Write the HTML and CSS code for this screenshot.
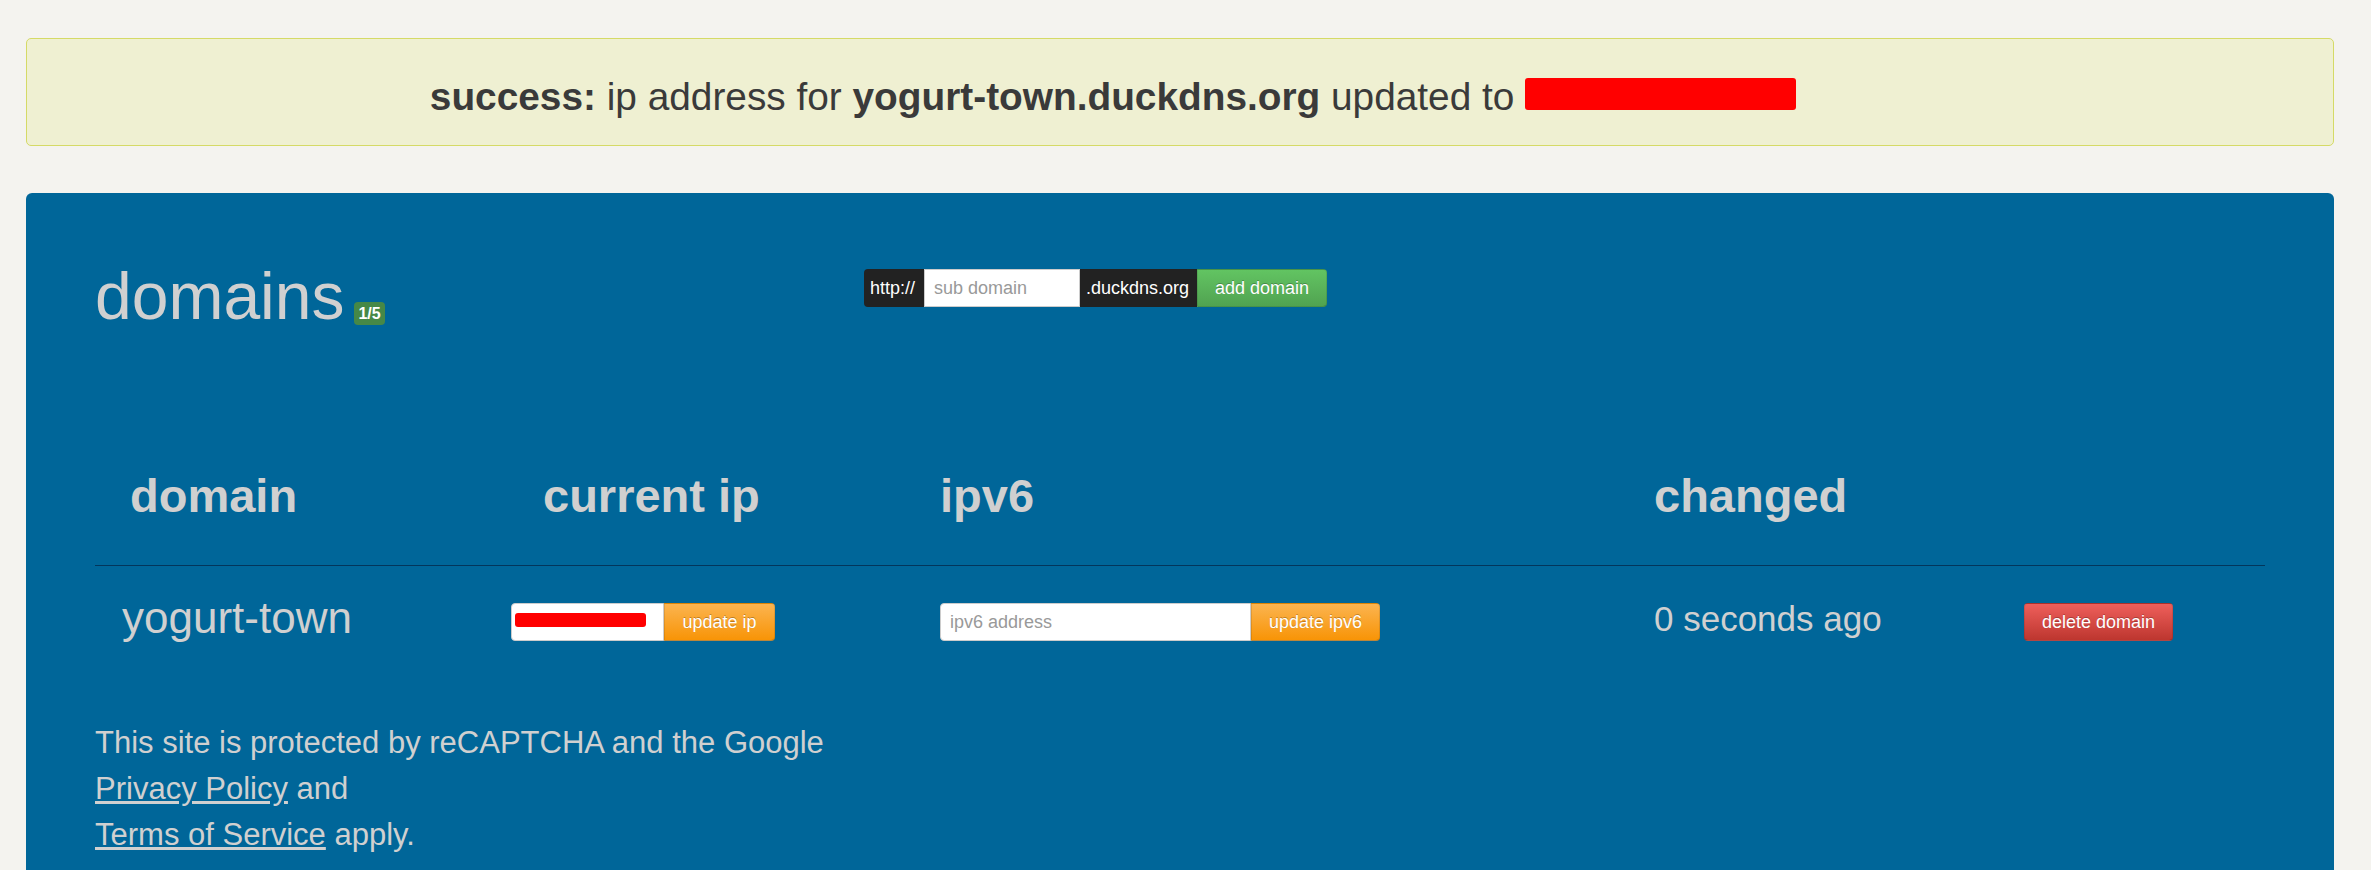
FILE: index.html
```html
<!DOCTYPE html>
<html lang="en">
<head>
<meta charset="utf-8">
<title>Duck DNS - domains</title>
<link rel="stylesheet" href="styles.css">
</head>
<body>
<div class="page">
  <div class="alert">
    <p class="alert-text"><b>success:</b> ip address for <b>yogurt-town.duckdns.org</b> updated to <span class="redact-inline"></span></p>
  </div>

  <section class="panel">
    <div class="panel-head">
      <div class="title-block">
        <h1 class="title">domains</h1><span class="badge">1/5</span>
      </div>
      <form class="add-form">
        <span class="addon addon-left">http://</span>
        <input class="field field-sub" type="text" placeholder="sub domain">
        <span class="addon addon-mid">.duckdns.org</span>
        <button class="btn btn-success btn-right" type="button">add domain</button>
      </form>
    </div>

    <div class="grid grid-head">
      <div class="th th-domain">domain</div>
      <div class="th th-ip">current ip</div>
      <div class="th">ipv6</div>
      <div class="th">changed</div>
      <div class="th"></div>
    </div>

    <div class="grid grid-row">
      <div class="td td-domain">yogurt-town</div>
      <div class="group">
        <div class="field-wrap">
          <input class="field field-ip" type="text" value="">
          <span class="redact-field"></span>
        </div>
        <button class="btn btn-warning btn-right btn-ip" type="button">update ip</button>
      </div>
      <div class="group">
        <input class="field field-ipv6" type="text" placeholder="ipv6 address">
        <button class="btn btn-warning btn-right btn-ipv6" type="button">update ipv6</button>
      </div>
      <div class="td td-changed">0 seconds ago</div>
      <div class="group">
        <button class="btn btn-danger" type="button">delete domain</button>
      </div>
    </div>

    <p class="legal">This site is protected by reCAPTCHA and the Google<br>
      <a href="#">Privacy Policy</a> and<br>
      <a href="#">Terms of Service</a> apply.</p>
  </section>
</div>
</body>
</html>
```

FILE: styles.css
```css
* { box-sizing: border-box; }

html, body {
  margin: 0;
  padding: 0;
  background: #f4f3ef;
  font-family: "Liberation Sans", Arial, sans-serif;
}

.page {
  padding: 38px 37px 0 26px;
}

/* success alert */
.alert {
  height: 108px;
  background: #eff0d2;
  border: 1px solid #d5da66;
  border-radius: 5px;
  display: flex;
  align-items: center;
  justify-content: center;
  padding: 10px 134px 0 0;
}

.alert-text {
  margin: 0;
  font-size: 38.8px;
  color: #3a3a3a;
  white-space: nowrap;
}

.redact-inline {
  display: inline-block;
  width: 271px;
  height: 32px;
  background: #ff0000;
  border-radius: 3px;
}

/* blue panel */
.panel {
  margin-top: 47px;
  background: #006699;
  border-radius: 6px 6px 0 0;
  padding: 70px 69px 60px;
  color: #d0d0d0;
}

.panel-head {
  display: flex;
  align-items: flex-start;
}

.title-block {
  width: 769px;
  flex: none;
  display: flex;
  align-items: baseline;
}

.title {
  margin: 0;
  font-size: 66px;
  line-height: 66px;
  font-weight: normal;
  color: #d0d0d0;
}

.badge {
  margin-left: 10px;
  display: inline-block;
  background: #468847;
  color: #fff;
  font-size: 16px;
  font-weight: bold;
  line-height: 17px;
  padding: 3px 4px;
  border-radius: 4px;
}

.add-form {
  margin: 6px 0 0;
  display: flex;
  height: 38px;
}

.addon {
  background: #222;
  color: #fff;
  font-size: 18px;
  line-height: 38px;
  height: 38px;
  padding: 0 6px;
  white-space: nowrap;
}

.addon-left { border-radius: 4px 0 0 4px; width: 60px; }
.addon-mid { width: 117px; border-radius: 0; }

.field {
  height: 38px;
  border: 1px solid #ccc;
  background: #fff;
  font-family: "Liberation Sans", Arial, sans-serif;
  font-size: 18px;
  color: #555;
  padding: 0 9px;
  margin: 0;
  outline: none;
}

.field::placeholder { color: #999; }

.field-sub { width: 156px; border-radius: 0; }
.field-ip { width: 153px; border-radius: 4px 0 0 4px; }
.field-ipv6 { width: 311px; border-radius: 4px 0 0 4px; }

.btn {
  height: 38px;
  margin: 0;
  font-family: "Liberation Sans", Arial, sans-serif;
  font-size: 18px;
  line-height: 20px;
  white-space: nowrap;
  color: #fff;
  text-shadow: 0 -1px 0 rgba(0, 0, 0, 0.25);
  border: 1px solid rgba(0, 0, 0, 0.1);
  border-bottom-color: rgba(0, 0, 0, 0.25);
  padding: 0 8px;
  border-radius: 4px;
  cursor: pointer;
  text-align: center;
}

.btn-right { border-radius: 0 4px 4px 0; }

.btn-success {
  width: 130px;
  background: linear-gradient(#62c462, #51a351);
}

.btn-warning {
  background: linear-gradient(#fbb450, #f89406);
}

.btn-ip { width: 111px; }
.btn-ipv6 { width: 129px; }

.btn-danger {
  width: 149px;
  background: linear-gradient(#ee5f5b, #bd362f);
}

/* table */
.grid {
  display: grid;
  grid-template-columns: 416px 429px 714px 370px 1fr;
}

.grid-head {
  margin-top: 140px;
  padding-bottom: 42px;
  border-bottom: 1px solid #03365c;
}

.th {
  font-size: 47px;
  font-weight: bold;
  line-height: 54px;
  color: #d0d0d0;
}

.th-domain { padding-left: 35px; }
.th-ip { padding-left: 32px; }

.grid-row {
  padding-top: 37px;
  grid-template-rows: 38px;
  align-items: start;
}

.group {
  display: flex;
  height: 38px;
}

.field-wrap {
  position: relative;
  height: 38px;
}

.redact-field {
  position: absolute;
  left: 4px;
  top: 10px;
  width: 131px;
  height: 14px;
  background: #ff0000;
  border-radius: 3px;
}

.td {
  color: #d0d0d0;
  height: 38px;
  line-height: 38px;
  white-space: nowrap;
}

.td-domain {
  font-size: 44px;
  padding-left: 27px;
  margin-top: -4px;
}

.td-changed {
  font-size: 35px;
  margin-top: -3px;
}

/* footer text */
.legal {
  margin: 79px 0 0;
  font-size: 31px;
  line-height: 46px;
  color: #d0d0d0;
}

.legal a {
  color: #d0d0d0;
  text-decoration: underline;
}
```
